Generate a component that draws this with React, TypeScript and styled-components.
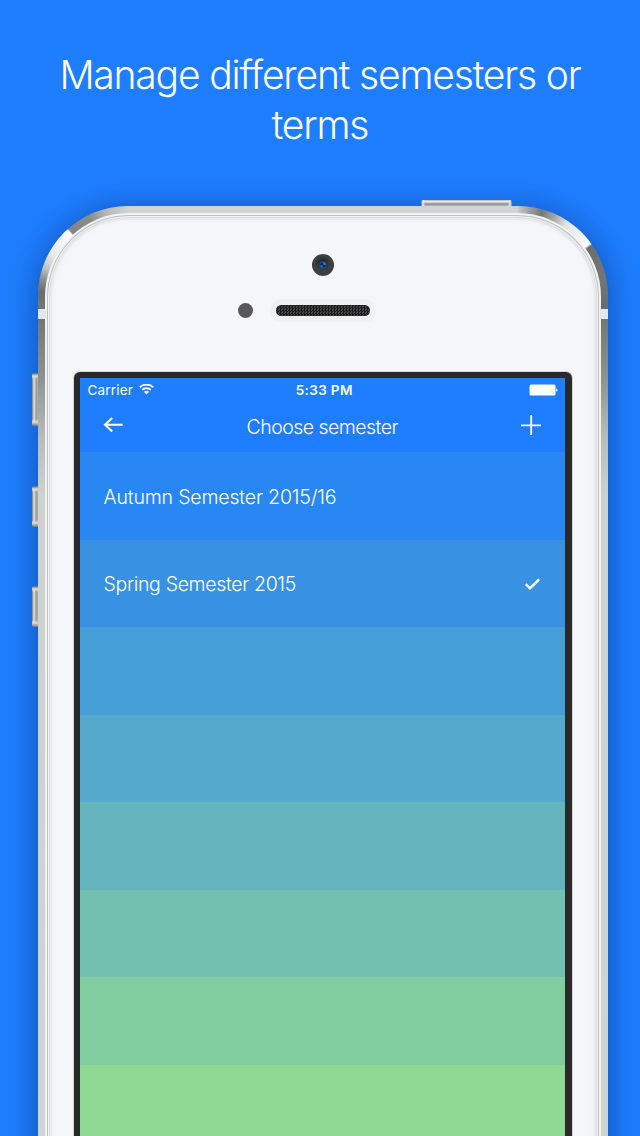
import React from "react";
import styled, { createGlobalStyle } from "styled-components";

const light = `"Helvetica Neue", Inter, "Liberation Sans", sans-serif`;

const GlobalStyle = createGlobalStyle`
  *, *::before, *::after { box-sizing: border-box; }
  html, body { margin: 0; background: #1e7eff; }
  body { height: 1136px; overflow: hidden; }
`;

const Page = styled.main`
  width: 640px;
  height: 1136px;
  overflow: hidden;
  background: #1e7eff;
  color: #fff;
  font-family: ${light};
  font-weight: 300;
`;

const Headline = styled.h1`
  height: 206px;
  margin: 0;
  padding-top: 50px;
  text-align: center;
  font-size: 39px;
  line-height: 50px;
  font-weight: 300;
`;

const HeadlineLine = styled.span<{ $track: number }>`
  display: block;
  white-space: nowrap;
  letter-spacing: ${(p) => p.$track}px;
`;

const Device = styled.section`
  position: relative;
  width: 570px;
  height: 1100px;
  margin-left: 38px;
  padding: 7px 7px 0;
  border-radius: 90px 90px 0 0;
  box-shadow: 0 4px 34px rgba(0, 15, 60, 0.42);
  background:
    conic-gradient(from 0deg at 90px 90px, #d2d4d3 0deg, #d2d4d3 180deg, #777a79 258deg, #6a6d6c 273deg,
      #8c8e8d 281deg, #c3c5c4 289deg, #e6e8e7 298deg, #fff 317.5deg, #828483 318.5deg,
      #8b8d8c 334deg, #b4b6b5 345deg, #d2d4d3 360deg) 0 0 / 90px 104px no-repeat,
    conic-gradient(from 0deg at 0 90px, #c6c9c7 0deg, #a1a4a2 7deg, #767978 16deg, #a8aaa9 25deg,
      #e3e5e4 34deg, #fbfcfb 54deg, #6b6e6c 55.5deg, #747775 76deg, #6a6d6c 96deg, #6a6d6c 360deg) 100% 0 / 90px 104px no-repeat,
    linear-gradient(#d2d4d3, #c8cbc9) 0 0 / 100% 104px no-repeat,
    linear-gradient(#747776 113px, #8d908e 170px, #b8bbb9 230px, #cfd1cf 290px, #d2d4d3 100%);
`;

const Rim = styled.div`
  height: 100%;
  padding: 2px 2px 0;
  border-radius: 84px 84px 0 0;
  background: #f1f3f2;
`;

const Glass = styled.div`
  height: 100%;
  border: solid #bfc1c2;
  border-width: 1px 1px 0;
  border-radius: 82px 82px 0 0;
  background: #f4f6f9;
  box-shadow: inset 0 0 0 1px #eff0f2, inset 0 0 0 2px #dddee3, inset 0 0 0 4px #e9e9ef, inset 0 0 5px 4px #f0f1f5;
`;

const Antenna = styled.i<{ $side: "left" | "right" }>`
  position: absolute;
  top: 103px;
  ${(p) => p.$side}: 0;
  width: 8px;
  height: 10px;
  background: #e4e8ea;
`;

const SideButton = styled.i<{ $top: number; $height: number }>`
  position: absolute;
  top: ${(p) => p.$top}px;
  left: -6px;
  width: 6px;
  height: ${(p) => p.$height}px;
  border-radius: 2px 0 0 2px;
  background:
    linear-gradient(#666 0, #e0e0e0 3px, transparent 6px, transparent calc(100% - 7px), #ddd calc(100% - 4px), #777 100%),
    linear-gradient(90deg, #777 0, #e5e5e5 2px, #c6c6c6 3px, #979997 4px, #b1b3b1 6px);
`;

const PowerButton = styled.i`
  position: absolute;
  top: -6px;
  left: 383px;
  width: 91px;
  height: 6px;
  border-radius: 2px 2px 0 0;
  background:
    linear-gradient(90deg, #777 0, #eee 2px, transparent 4px, transparent 87px, #eee 89px, #777 91px),
    linear-gradient(#8d9499 0, #f4f5f5 1px, #dcdddd 2px, #8d8f8e 4px, #b9bbba 6px);
`;

const Forehead = styled.div`
  display: flex;
  flex-direction: column;
  align-items: center;
  height: 156px;
  padding-top: 38px;
`;

const Camera = styled.div`
  display: grid;
  place-items: center;
  width: 22px;
  height: 22px;
  border-radius: 50%;
  background: radial-gradient(circle at 50% 42%, #282a2c 0 22%, #414141 45%, #3c3c3c 62%, #66696b 100%);
`;

const SpeakerRow = styled.div`
  display: grid;
  grid-template-columns: 1fr auto 1fr;
  align-items: center;
  width: 100%;
  margin-top: 23px;
`;

const Sensor = styled.i`
  justify-self: end;
  width: 15px;
  height: 15px;
  margin-right: 17px;
  border-radius: 50%;
  background: #585858;
`;

const SpeakerWell = styled.div`
  padding: 6px;
  border-radius: 12px;
  background: #eff0f4;
`;

const Speaker = styled.div`
  width: 94px;
  height: 11px;
  border-radius: 6px;
  background:
    conic-gradient(#1c1c1c 25%, #484848 0 50%, #1c1c1c 0 75%, #484848 0) 0 0 / 3px 3px;
  box-shadow: inset 0 0 2px #111;
`;

const Bezel = styled.div`
  width: 498px;
  height: 790px;
  margin-left: 26px;
  padding: 6px 7px 0 6px;
  border-radius: 6px 6px 0 0;
  background: #292929;
  box-shadow: 0 0 0 1px rgba(120, 120, 120, 0.25);
`;

const Screen = styled.div`
  height: 100%;
  overflow: hidden;
  background: #1e7eff;
`;

const StatusBar = styled.div`
  display: grid;
  grid-template-columns: 1fr auto 1fr;
  align-items: center;
  height: 24px;
  padding: 0 7px 0 7.5px;
  font-family: Inter, sans-serif;
  font-size: 13.5px;
  line-height: 24px;
`;

const Carrier = styled.div`
  display: flex;
  align-items: center;
  gap: 5.5px;
  font-weight: 400;
  letter-spacing: 0.18px;
`;

const Clock = styled.div`
  padding-left: 3px;
  font-weight: 600;
  letter-spacing: 0.35px;
`;

const BatterySlot = styled.div`
  display: flex;
  justify-content: flex-end;
`;

const NavBar = styled.header`
  display: grid;
  grid-template-columns: 1fr auto 1fr;
  align-items: start;
  height: 50px;
  padding: 0 24px 0 22px;
`;

const NavTitle = styled.h2`
  margin: 0;
  padding: 13px 0 0 1.5px;
  font-size: 19.5px;
  line-height: 24px;
  font-weight: 300;
  letter-spacing: -0.54px;
`;

const NavButton = styled.button<{ $end?: boolean; $top: number }>`
  justify-self: ${(p) => (p.$end ? "end" : "start")};
  display: flex;
  margin: ${(p) => p.$top}px 0 0;
  padding: 0;
  border: 0;
  background: none;
  color: #fff;
`;

const List = styled.ul`
  margin: 0;
  padding: 0;
  list-style: none;
`;

const Row = styled.li<{ $color: string }>`
  display: flex;
  align-items: center;
  justify-content: space-between;
  height: 87.5px;
  padding: 2px 25px 0 23.5px;
  background: ${(p) => p.$color};
  font-size: 19.5px;
  line-height: 24px;
`;

const RowLabel = styled.span<{ $track: number }>`
  white-space: nowrap;
  letter-spacing: ${(p) => p.$track}px;
`;

type Semester = { color: string; name?: string; track?: number; selected?: boolean };

const semesters: Semester[] = [
  { color: "#2887f2", name: "Autumn Semester 2015/16", track: -0.17 },
  { color: "#3891e3", name: "Spring Semester 2015", track: -0.34, selected: true },
  { color: "#469ed8" },
  { color: "#55a9cb" },
  { color: "#64b5bd" },
  { color: "#72c1b0" },
  { color: "#80cda0" },
  { color: "#8fd893" },
];

const WifiIcon = () => (
  <svg width="15" height="12" viewBox="0 0 15 12" fill="none" stroke="#fff" strokeWidth="1.9">
    <path d="M.8 3.2C4.6-.2 10.4-.2 14.2 3.2M3.2 5.9c2.5-2.2 6.1-2.2 8.6 0" />
    <path d="M4.9 7.8c1.5-1.4 3.7-1.4 5.2 0L7.5 10.4z" fill="#fff" stroke="none" />
  </svg>
);

const BatteryIcon = () => (
  <svg width="29" height="12" viewBox="0 0 29 12" fill="#fff">
    <rect x=".5" y=".5" width="26" height="11" rx="1.5" />
    <path d="M27.2 4.2c1.8.5 1.8 3.1 0 3.6z" />
  </svg>
);

const BackIcon = () => (
  <svg width="21" height="16" viewBox="0 0 21 16" fill="none" stroke="currentColor" strokeWidth="2">
    <path d="M20.7 7.7H2.8M10.2 1 3 7.7l7.2 6.7" />
  </svg>
);

const PlusIcon = () => (
  <svg width="20" height="20" viewBox="0 0 20 20" fill="none" stroke="currentColor" strokeWidth="1.8">
    <path d="M10.2 0v20M0 10.4h20" />
  </svg>
);

const CheckIcon = () => (
  <svg width="15" height="12" viewBox="0 0 15 12" fill="none" stroke="#fff" strokeWidth="2.5">
    <path d="m.8 6.2 4.2 4L14.2 1.4" />
  </svg>
);

const CameraLens = () => (
  <svg width="8" height="8" viewBox="0 0 8 8">
    <circle cx="4" cy="4" r="3.8" fill="#16579e" />
    <path d="M1 3.2 3.2 1l.8 2L6.4 1.8 5.6 4l1.6.8L4.6 7 3.6 5.2z" fill="#0d2443" />
    <circle cx="5.3" cy="3" r="1.1" fill="#2a90ea" />
    <circle cx="2.6" cy="5.3" r="1" fill="#1d73c9" />
  </svg>
);

export default function App() {
  return (
    <Page>
      <GlobalStyle />
      <Headline>
        <HeadlineLine $track={-1.17}>Manage different semesters or</HeadlineLine>
        <HeadlineLine $track={-1.17}>terms</HeadlineLine>
      </Headline>
      <Device>
        <PowerButton />
        <SideButton $top={167} $height={53} />
        <SideButton $top={280} $height={41} />
        <SideButton $top={380} $height={41} />
        <Antenna $side="left" />
        <Antenna $side="right" />
        <Rim>
          <Glass>
            <Forehead>
              <Camera>
                <CameraLens />
              </Camera>
              <SpeakerRow>
                <Sensor />
                <SpeakerWell>
                  <Speaker />
                </SpeakerWell>
              </SpeakerRow>
            </Forehead>
            <Bezel>
              <Screen>
                <StatusBar>
                  <Carrier>
                    Carrier
                    <WifiIcon />
                  </Carrier>
                  <Clock>5:33 PM</Clock>
                  <BatterySlot>
                    <BatteryIcon />
                  </BatterySlot>
                </StatusBar>
                <NavBar>
                  <NavButton $top={15} aria-label="Back">
                    <BackIcon />
                  </NavButton>
                  <NavTitle>Choose semester</NavTitle>
                  <NavButton $end $top={13} aria-label="Add semester">
                    <PlusIcon />
                  </NavButton>
                </NavBar>
                <List>
                  {semesters.map((s) => (
                    <Row key={s.color} $color={s.color}>
                      {s.name && <RowLabel $track={s.track ?? 0}>{s.name}</RowLabel>}
                      {s.selected && <CheckIcon />}
                    </Row>
                  ))}
                </List>
              </Screen>
            </Bezel>
          </Glass>
        </Rim>
      </Device>
    </Page>
  );
}
